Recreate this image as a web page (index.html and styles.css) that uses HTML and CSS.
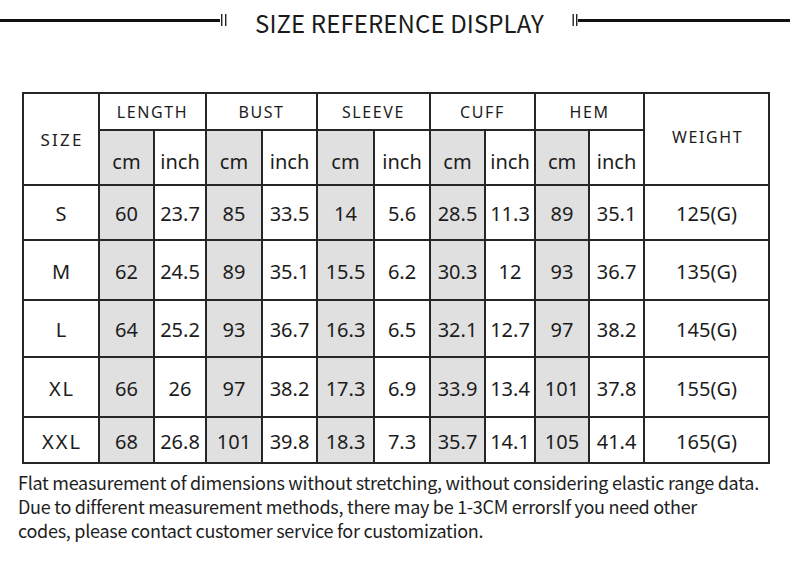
FILE: index.html
```html
<!DOCTYPE html>
<html>
<head>
<meta charset="utf-8">
<link rel="stylesheet" href="styles.css">
</head>
<body>
<header class="title-bar">
  <span class="rule rule-left"></span>
  <svg class="bars" width="8" height="14" viewBox="0 0 8 14"><rect x="1" y="1" width="1.4" height="12" fill="#222"/><rect x="5" y="1" width="1.4" height="12" fill="#222"/></svg>
  <h1 class="title">SIZE REFERENCE DISPLAY</h1>
  <svg class="bars" width="6" height="14" viewBox="0 0 6 14"><rect x="0.5" y="1" width="1.4" height="12" fill="#222"/><rect x="4" y="1" width="1.4" height="12" fill="#222"/></svg>
  <span class="rule rule-right"></span>
</header>

<table class="size-table">
  <colgroup>
    <col class="c-size"><col class="c55"><col class="c52"><col class="c56"><col class="c55"><col class="c57"><col class="c56"><col class="c55"><col class="c50"><col class="c54"><col class="c55"><col class="c-weight">
  </colgroup>
  <tr class="r-head1">
    <th rowspan="2" class="label big">SIZE</th>
    <th colspan="2" class="label">LENGTH</th>
    <th colspan="2" class="label">BUST</th>
    <th colspan="2" class="label">SLEEVE</th>
    <th colspan="2" class="label">CUFF</th>
    <th colspan="2" class="label">HEM</th>
    <th rowspan="2" class="label weight">WEIGHT</th>
  </tr>
  <tr class="r-head2">
    <td class="unit cm">cm</td><td class="unit">inch</td>
    <td class="unit cm">cm</td><td class="unit">inch</td>
    <td class="unit cm">cm</td><td class="unit">inch</td>
    <td class="unit cm">cm</td><td class="unit">inch</td>
    <td class="unit cm">cm</td><td class="unit">inch</td>
  </tr>
  <tr class="r-s">
    <td>S</td><td class="cm">60</td><td>23.7</td><td class="cm">85</td><td>33.5</td><td class="cm">14</td><td>5.6</td><td class="cm">28.5</td><td>11.3</td><td class="cm">89</td><td>35.1</td><td>125(G)</td>
  </tr>
  <tr class="r-m">
    <td>M</td><td class="cm">62</td><td>24.5</td><td class="cm">89</td><td>35.1</td><td class="cm">15.5</td><td>6.2</td><td class="cm">30.3</td><td>12</td><td class="cm">93</td><td>36.7</td><td>135(G)</td>
  </tr>
  <tr class="r-l">
    <td>L</td><td class="cm">64</td><td>25.2</td><td class="cm">93</td><td>36.7</td><td class="cm">16.3</td><td>6.5</td><td class="cm">32.1</td><td>12.7</td><td class="cm">97</td><td>38.2</td><td>145(G)</td>
  </tr>
  <tr class="r-xl">
    <td class="sp">XL</td><td class="cm">66</td><td>26</td><td class="cm">97</td><td>38.2</td><td class="cm">17.3</td><td>6.9</td><td class="cm">33.9</td><td>13.4</td><td class="cm">101</td><td>37.8</td><td>155(G)</td>
  </tr>
  <tr class="r-xxl">
    <td class="sp">XXL</td><td class="cm">68</td><td>26.8</td><td class="cm">101</td><td>39.8</td><td class="cm">18.3</td><td>7.3</td><td class="cm">35.7</td><td>14.1</td><td class="cm">105</td><td>41.4</td><td>165(G)</td>
  </tr>
</table>

<p class="note">Flat measurement of dimensions without stretching, without considering elastic range data.<br>Due to different measurement methods, there may be 1-3CM errorsIf you need other<br>codes, please contact customer service for customization.</p>
</body>
</html>
```

FILE: styles.css
```css
html, body {
  margin: 0;
  padding: 0;
  background: #ffffff;
}

body {
  width: 790px;
  height: 573px;
  overflow: hidden;
  color: #1c1c1c;
}

.title-bar {
  display: flex;
  align-items: center;
  height: 40px;
}

.rule {
  display: block;
  height: 3px;
  background: #111;
}

.rule-left {
  width: 220px;
}

.rule-right {
  flex: 1;
}

.bars {
  display: block;
  flex: none;
}

.title {
  margin: 6px 28px 0 27px;
  font-family: "Noto Sans CJK SC", "Noto Sans", sans-serif;
  font-weight: 400;
  font-size: 24px;
  letter-spacing: 0.1px;
  line-height: 1;
  white-space: nowrap;
  color: #1a1a1a;
}

.size-table {
  margin: 52px 0 0 22px;
  border-collapse: collapse;
  table-layout: fixed;
  width: 747px;
  font-family: "Noto Sans", sans-serif;
  font-size: 20px;
  color: #1c1c1c;
}

.c-size { width: 76px; }
.c50 { width: 50px; }
.c52 { width: 52px; }
.c54 { width: 54px; }
.c55 { width: 55px; }
.c56 { width: 56px; }
.c57 { width: 57px; }
.c-weight { width: 125px; }

.size-table th,
.size-table td {
  border: 2px solid #262626;
  padding: 0;
  text-align: center;
  vertical-align: middle;
  font-weight: 400;
  white-space: nowrap;
}

.size-table .cm {
  background: #e0e0e0;
}

.label {
  font-size: 16px;
  letter-spacing: 1.6px;
}

.label.big {
  font-size: 17px;
  letter-spacing: 2.2px;
  text-indent: 2.2px;
}

.label.weight {
  padding-bottom: 4px;
  text-indent: 2px;
}

.size-table td.unit {
  padding-top: 8px;
}

.r-head1 { height: 37px; }
.r-head2 { height: 55px; }
.r-s { height: 55px; }
.r-m { height: 60px; }
.r-l { height: 57px; }
.r-xl { height: 60px; }
.r-xxl { height: 46px; }

.size-table td.sp {
  letter-spacing: 2px;
  text-indent: 2px;
}

.r-s td, .r-m td, .r-l td, .r-xl td, .r-xxl td {
  padding-top: 2px;
}

.note {
  margin: 6px 0 0 18px;
  font-family: "Noto Sans CJK SC", "Noto Sans", sans-serif;
  font-size: 18px;
  letter-spacing: -0.28px;
  line-height: 24px;
  color: #1e1e1e;
}
```
